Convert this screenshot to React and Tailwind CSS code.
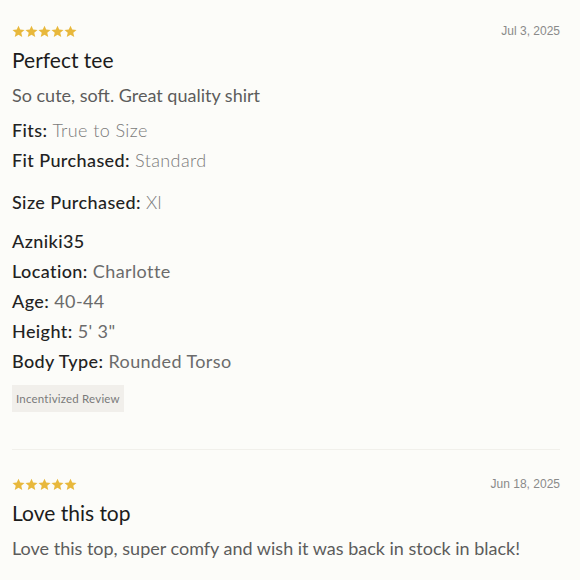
import React from "react";

function Stars() {
  return (
    <div className="flex">
      {[0, 1, 2, 3, 4].map((i) => (
        <svg key={i} width="13" height="13" viewBox="0 0 24 24">
          <path
            d="M12 1.2l3.2 7.3 7.9.7-6 5.3 1.8 7.8L12 18.2 5.1 22.3l1.8-7.8-6-5.3 7.9-.7z"
            fill="#e8b83c"
          />
        </svg>
      ))}
    </div>
  );
}

function Header({ date }) {
  return (
    <div className="flex h-[14px] items-center justify-between">
      <Stars />
      <span className="text-[12px] leading-none text-[#8a8a8a]" style={{ fontFamily: "'Liberation Sans', Arial, sans-serif" }}>{date}</span>
    </div>
  );
}

function Row({ label, value, valueClass = "text-[#6b6b6b]" }) {
  return (
    <div className="text-[18px] leading-[30px] tracking-[0.4px]">
      <span className="font-medium text-[#222]">{label}</span>{" "}
      <span className={valueClass}>{value}</span>
    </div>
  );
}

export default function App() {
  return (
    <div
      className="min-h-[580px] w-[580px] bg-[#fcfcf9] px-3"
      style={{ fontFamily: "Lato, 'Noto Sans', sans-serif" }}
    >
      <div className="w-[548px] pt-6">
        <Header date="Jul 3, 2025" />
        <div className="mt-2 text-[21px] leading-[28px] text-[#1c1c1c]">Perfect tee</div>
        <div className="mt-2 text-[18px] leading-[26px] text-[#5c5c5c]">
          So cute, soft. Great quality shirt
        </div>
        <div className="mt-[7px]">
          <Row label="Fits:" value="True to Size" valueClass="text-[#7a7a7a] font-light" />
          <Row label="Fit Purchased:" value="Standard" valueClass="text-[#7a7a7a] font-light" />
        </div>
        <div className="mt-3">
          <Row label="Size Purchased:" value="Xl" valueClass="text-[#7a7a7a] font-light" />
        </div>
        <div className="mt-[9px]">
          <div className="text-[18px] leading-[30px] tracking-[0.4px] font-medium text-[#222]">Azniki35</div>
          <Row label="Location:" value="Charlotte" />
          <Row label="Age:" value="40-44" />
          <Row label="Height:" value={"5' 3\""} />
          <Row label="Body Type:" value="Rounded Torso" />
        </div>
        <div className="mt-[9px] inline-flex h-[27px] items-center bg-[#f1efeb] px-[4px] text-[11.5px] tracking-[0.2px] text-[#7a7a7a]">
          Incentivized Review
        </div>
      </div>
      <div className="mt-[37px] h-px w-[548px] bg-[#f1f0eb]" />
      <div className="w-[548px] pt-[27px]">
        <Header date="Jun 18, 2025" />
        <div className="mt-2 text-[21px] leading-[28px] text-[#1c1c1c]">Love this top</div>
        <div className="mt-2 text-[18px] leading-[26px] text-[#5c5c5c]">
          Love this top, super comfy and wish it was back in stock in black!
        </div>
      </div>
    </div>
  );
}
